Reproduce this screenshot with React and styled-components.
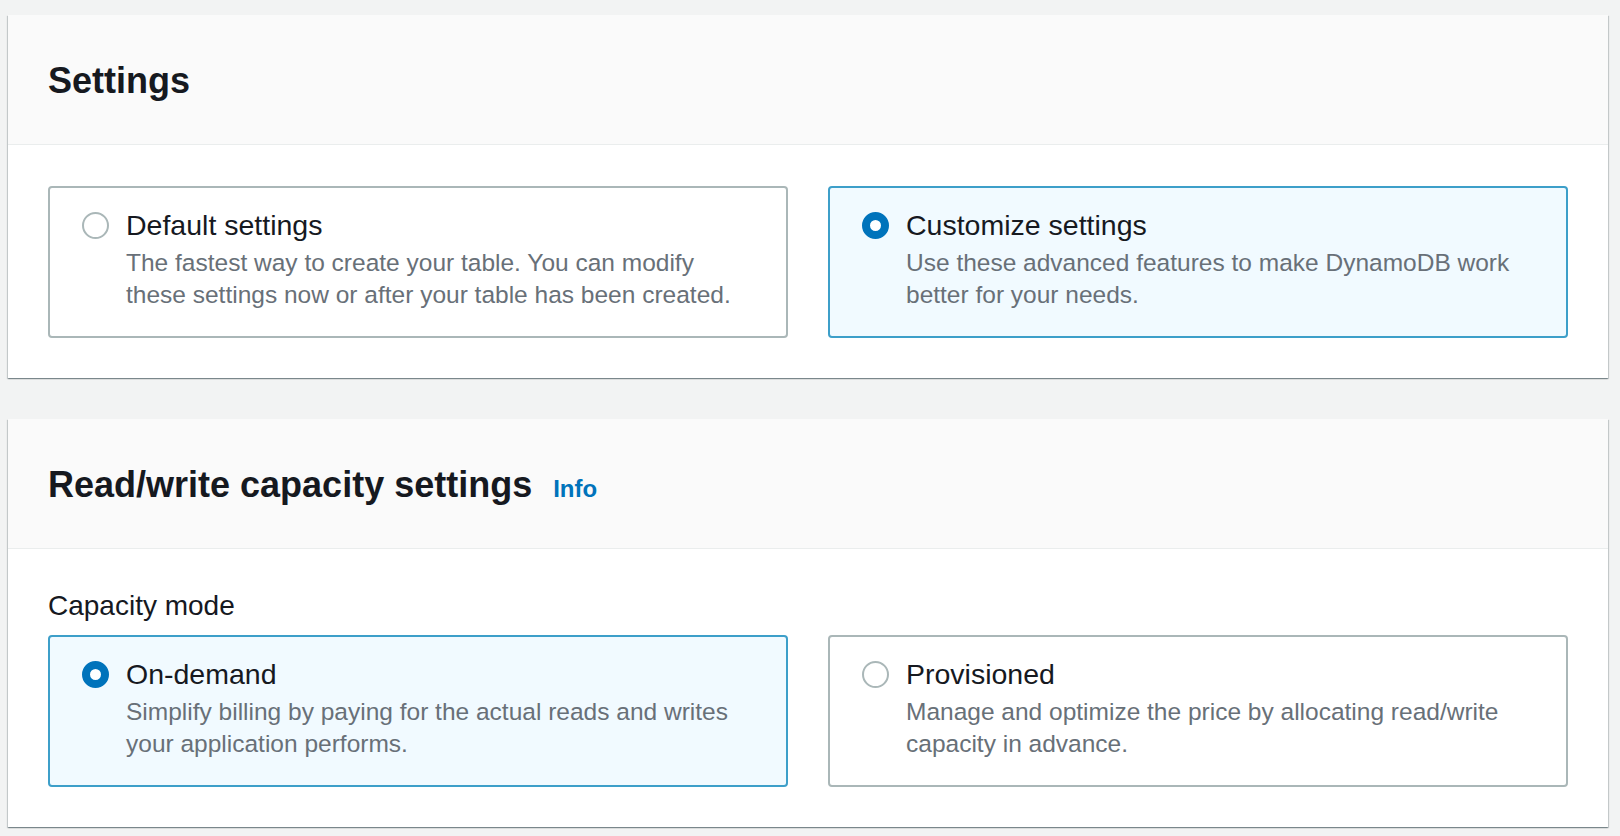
import React, { useState } from 'react';
import styled, { createGlobalStyle } from 'styled-components';

const GlobalStyle = createGlobalStyle`
  html, body {
    margin: 0;
    padding: 0;
    background: #f2f3f3;
    font-family: "Liberation Sans", Arial, sans-serif;
    color: #16191f;
  }
  * {
    box-sizing: border-box;
  }
`;

const Page = styled.div`
  display: flex;
  flex-direction: column;
  gap: 41px;
  padding: 15px 12px 0 8px;
  min-height: 836px;
`;

const Container = styled.section`
  background: #ffffff;
  box-shadow: 0 1px 1px 0 rgba(0, 28, 36, 0.3), 1px 1px 1px 0 rgba(0, 28, 36, 0.15),
    -1px 1px 1px 0 rgba(0, 28, 36, 0.15);
`;

const Header = styled.div`
  display: flex;
  align-items: baseline;
  gap: 21px;
  padding: 44px 40px 41px;
  background: #fafafa;
  border-bottom: 1px solid #eaeded;
`;

const Title = styled.h2`
  margin: 0;
  font-size: 36px;
  line-height: 44px;
  font-weight: 700;
  color: #16191f;
`;

const InfoLink = styled.a`
  font-size: 24px;
  font-weight: 700;
  color: #0073bb;
  text-decoration: none;
  cursor: pointer;
`;

const Body = styled.div`
  padding: 41px 40px 40px;
`;

const FieldLabel = styled.div`
  font-size: 28px;
  line-height: 32px;
  color: #16191f;
  margin-bottom: 13px;
`;

const TileGrid = styled.div`
  display: grid;
  grid-template-columns: 1fr 1fr;
  gap: 40px;
`;

const Tile = styled.label`
  display: flex;
  align-items: flex-start;
  padding: 15px 32px 25px;
  border: 2px solid ${props => (props.$selected ? '#3d9fc9' : '#aab7b8')};
  background: ${props => (props.$selected ? '#f1faff' : '#ffffff')};
  border-radius: 4px;
  cursor: pointer;
`;

const RadioSlot = styled.div`
  display: flex;
  align-items: center;
  height: 44px;
  margin-right: 17px;
  flex-shrink: 0;
`;

const Radio = styled.span`
  display: block;
  width: 27px;
  height: 27px;
  border-radius: 50%;
  background: #ffffff;
  border: ${props => (props.$selected ? '8.5px solid #0073bb' : '2px solid #aab7b8')};
`;

const TileText = styled.div`
  display: flex;
  flex-direction: column;
`;

const TileLabel = styled.span`
  font-size: 28.5px;
  line-height: 44px;
  color: #16191f;
`;

const TileDescription = styled.span`
  font-size: 24.5px;
  line-height: 32px;
  color: #687078;
  max-width: 618px;
`;

const RadioTile = ({ label, description, selected, onSelect }) => (
  <Tile $selected={selected} onClick={onSelect}>
    <RadioSlot>
      <Radio $selected={selected} />
    </RadioSlot>
    <TileText>
      <TileLabel>{label}</TileLabel>
      <TileDescription>{description}</TileDescription>
    </TileText>
  </Tile>
);

const settingsOptions = [
  {
    id: 'default',
    label: 'Default settings',
    description: 'The fastest way to create your table. You can modify these settings now or after your table has been created.'
  },
  {
    id: 'custom',
    label: 'Customize settings',
    description: 'Use these advanced features to make DynamoDB work better for your needs.'
  }
];

const capacityOptions = [
  {
    id: 'on-demand',
    label: 'On-demand',
    description: 'Simplify billing by paying for the actual reads and writes your application performs.'
  },
  {
    id: 'provisioned',
    label: 'Provisioned',
    description: 'Manage and optimize the price by allocating read/write capacity in advance.'
  }
];

const App = () => {
  const [settings, setSettings] = useState('custom');
  const [capacity, setCapacity] = useState('on-demand');

  return (
    <>
      <GlobalStyle />
      <Page>
        <Container>
          <Header>
            <Title>Settings</Title>
          </Header>
          <Body>
            <TileGrid>
              {settingsOptions.map(opt => (
                <RadioTile
                  key={opt.id}
                  label={opt.label}
                  description={opt.description}
                  selected={settings === opt.id}
                  onSelect={() => setSettings(opt.id)}
                />
              ))}
            </TileGrid>
          </Body>
        </Container>

        <Container>
          <Header>
            <Title>Read/write capacity settings</Title>
            <InfoLink>Info</InfoLink>
          </Header>
          <Body>
            <FieldLabel>Capacity mode</FieldLabel>
            <TileGrid>
              {capacityOptions.map(opt => (
                <RadioTile
                  key={opt.id}
                  label={opt.label}
                  description={opt.description}
                  selected={capacity === opt.id}
                  onSelect={() => setCapacity(opt.id)}
                />
              ))}
            </TileGrid>
          </Body>
        </Container>
      </Page>
    </>
  );
};

export default App;
